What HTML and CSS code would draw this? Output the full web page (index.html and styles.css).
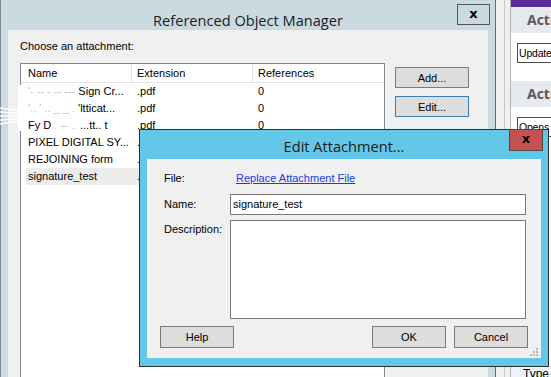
FILE: index.html
```html
<!DOCTYPE html>
<html lang="en">
<head>
    <meta charset="UTF-8">
    <title>Referenced Object Manager</title>
    <link rel="stylesheet" href="styles.css">
</head>
<body>
    <div class="desktop">
        <!-- finestra principale -->
        <div class="manager">
            <div class="win-title">
                <span class="title-text">Referenced Object Manager</span>
                <span class="close-btn">x</span>
            </div>
            <div class="manager-body">
                <div class="prompt">Choose an attachment:</div>
                <div class="manager-row">
                    <div class="listview">
                        <div class="lv-header">
                            <span class="col-name">Name</span>
                            <span class="col-ext">Extension</span>
                            <span class="col-ref">References</span>
                        </div>
                        <div class="lv-row over-patch">
                            <span class="col-name"><span class="smudge">'- -- - -- ---  </span>Sign Cr...</span>
                            <span class="col-ext">.pdf</span>
                            <span class="col-ref">0</span>
                        </div>
                        <div class="lv-row over-patch">
                            <span class="col-name"><span class="smudge">'.. ' .. _ _ . </span>'ltticat...</span>
                            <span class="col-ext">.pdf</span>
                            <span class="col-ref">0</span>
                        </div>
                        <div class="lv-row over-patch">
                            <span class="col-name">Fy D<span class="smudge">.. -- ..</span> ...tt.. t</span>
                            <span class="col-ext">.pdf</span>
                            <span class="col-ref">0</span>
                        </div>
                        <div class="lv-row">
                            <span class="col-name">PIXEL DIGITAL SY...</span>
                            <span class="col-ext">.pdf</span>
                            <span class="col-ref">0</span>
                        </div>
                        <div class="lv-row">
                            <span class="col-name">REJOINING form</span>
                            <span class="col-ext">.pdf</span>
                            <span class="col-ref">0</span>
                        </div>
                        <div class="lv-row selected">
                            <span class="col-name">signature_test</span>
                            <span class="col-ext">.pdf</span>
                            <span class="col-ref">0</span>
                        </div>
                    </div>
                    <div class="side-buttons">
                        <button class="btn">Add...</button>
                        <button class="btn btn-focus">Edit...</button>
                    </div>
                </div>
            </div>
        </div>

        <div class="gutter"><div class="gutter-line"></div></div>

        <!-- pannello a destra -->
        <div class="side-panel">
            <div class="panel-top"></div>
            <div class="panel-band">Acti</div>
            <div class="panel-section"><div class="panel-input">Update</div></div>
            <div class="panel-band">Acti</div>
            <div class="panel-section tall"><div class="panel-input">Opens</div></div>
            <div class="panel-foot">Type</div>
        </div>

        <!-- ritaglio bianco sopra la lista -->
        <div class="patch"></div>
        <svg class="streaks" width="30" height="22" viewBox="0 0 30 22">
            <path d="M0 2 L24 5 M0 6 L26 8 M0 10 L28 10 M0 14 L26 12 M0 18 L22 15" stroke="#fff" stroke-width="1.6" fill="none"/>
        </svg>

        <!-- finestra di dialogo -->
        <div class="dialog">
            <div class="win-title dialog-title">
                <span class="title-text">Edit Attachment...</span>
                <span class="close-btn close-red">x</span>
            </div>
            <div class="dialog-body">
                <div class="field-row file-row">
                    <span class="field-label">File:</span>
                    <a class="link" href="#">Replace Attachment File</a>
                </div>
                <div class="field-row name-row">
                    <span class="field-label">Name:</span>
                    <div class="textbox">signature_test</div>
                </div>
                <div class="field-row desc-row">
                    <span class="field-label">Description:</span>
                    <div class="textarea"></div>
                </div>
                <div class="dialog-buttons">
                    <button class="btn">Help</button>
                    <span class="spacer"></span>
                    <button class="btn">OK</button>
                    <button class="btn">Cancel</button>
                </div>
                <svg class="grip" width="10" height="10" viewBox="0 0 10 10">
                    <rect x="8" y="2" width="2" height="2" fill="#b8b8b8"/>
                    <rect x="5" y="5" width="2" height="2" fill="#b8b8b8"/>
                    <rect x="8" y="5" width="2" height="2" fill="#b8b8b8"/>
                    <rect x="2" y="8" width="2" height="2" fill="#b8b8b8"/>
                    <rect x="5" y="8" width="2" height="2" fill="#b8b8b8"/>
                    <rect x="8" y="8" width="2" height="2" fill="#b8b8b8"/>
                </svg>
            </div>
        </div>
    </div>
</body>
</html>
```

FILE: styles.css
```css
* {
    box-sizing: border-box;
}
body {
    margin: 0;
    font-family: "Liberation Sans", Arial, sans-serif;
    font-size: 11px;
    color: #000;
    background-color: #f0f0f0;
}
.desktop {
    position: relative;
    width: 551px;
    height: 377px;
    overflow: hidden;
    display: flex;
}

/* finestra principale */
.manager {
    flex: none;
    width: 496px;
    height: 377px;
    background-color: #c9dbe1;
    border-left: 1px solid #7f8b90;
    border-right: 1px solid #6b6b6b;
    padding: 0 7px;
    display: flex;
    flex-direction: column;
}
.win-title {
    height: 33px;
    display: grid;
    grid-template-columns: 1fr auto 1fr;
    align-items: start;
}
.title-text {
    grid-column: 2;
    font-family: "Open Sans", sans-serif;
    font-size: 14.6px;
    line-height: 20px;
    padding-top: 10px;
    color: #1b1b1b;
    white-space: nowrap;
}
.close-btn {
    grid-column: 3;
    justify-self: end;
    width: 33px;
    height: 21px;
    margin-top: 4px;
    margin-right: -2px;
    border: 1px solid #555;
    text-align: center;
    font-family: "DejaVu Sans", sans-serif;
    font-weight: bold;
    font-size: 13px;
    line-height: 17px;
}
.manager-body {
    flex: 1;
    background-color: #f0f0f0;
    padding: 10px 0 0 12px;
}
.prompt {
    line-height: 13px;
}
.manager-row {
    display: flex;
    gap: 10px;
    margin-top: 10px;
}
.listview {
    width: 365px;
    height: 400px;
    background-color: #fff;
    border: 1px solid #828790;
}
.lv-header {
    display: grid;
    grid-template-columns: 111px 121px 1fr;
    height: 19px;
    border-bottom: 1px solid #e5e5e5;
}
.lv-header span {
    padding-top: 1px;
    line-height: 17px;
    border-right: 1px solid #e5e5e5;
}
.lv-header .col-ref {
    border-right: none;
}
.col-name {
    padding-left: 7px;
    white-space: nowrap;
    overflow: hidden;
}
.col-ext,
.col-ref {
    padding-left: 5px;
}
.lv-row {
    display: grid;
    grid-template-columns: 106px 121px 1fr;
    margin-left: 5px;
    height: 17px;
    line-height: 17px;
}
.lv-row .col-name {
    padding-left: 2px;
}
.lv-row.selected {
    background-color: #ececec;
}
.over-patch {
    position: relative;
    z-index: 1;
}
.smudge {
    color: #c4c4c4;
}
.side-buttons {
    width: 74px;
    margin-top: 4px;
    display: flex;
    flex-direction: column;
    gap: 8px;
}
.btn {
    height: 21px;
    padding: 0;
    font-family: "Liberation Sans", Arial, sans-serif;
    font-size: 11px;
    color: #000;
    background-color: #dddddd;
    border: 1px solid #7c7c7c;
}
.btn-focus {
    border-color: #3c7fb1;
}

/* spazio tra le finestre */
.gutter {
    flex: none;
    width: 14px;
    background-color: #f0f0f0;
    padding-left: 8px;
}
.gutter-line {
    width: 1px;
    height: 100%;
    background-color: #c7c7c7;
}

/* pannello a destra */
.side-panel {
    flex: none;
    width: 41px;
    background-color: #fff;
    border-left: 1px solid #b5b5b5;
    overflow: hidden;
}
.panel-top {
    height: 7px;
    background-color: #5a2b97;
}
.panel-band {
    height: 26px;
    padding-left: 16px;
    background-color: #e6e9ee;
    font-family: "Open Sans", sans-serif;
    font-weight: bold;
    font-size: 14px;
    line-height: 26px;
    color: #5a5a5a;
    white-space: nowrap;
}
.panel-section {
    height: 48px;
    padding: 10px 0 0 6px;
}
.panel-section.tall {
    height: 259px;
}
.panel-input {
    width: 60px;
    height: 20px;
    border: 1px solid #4e4e4e;
    padding-left: 1px;
    font-size: 10.5px;
    letter-spacing: -0.2px;
    line-height: 18px;
}
.panel-foot {
    padding-left: 12px;
    font-size: 12px;
    line-height: 16px;
    background-color: #eef4fa;
}

/* ritaglio bianco */
.patch {
    position: absolute;
    left: 18px;
    top: 85px;
    width: 117px;
    height: 46px;
    background-color: #fff;
}
.streaks {
    position: absolute;
    left: 0;
    top: 106px;
}

/* finestra di dialogo */
.dialog {
    position: absolute;
    z-index: 2;
    left: 139px;
    top: 129px;
    width: 410px;
    height: 238px;
    background-color: #63c7e8;
    border: 1px solid #2f2f2f;
    padding: 0 7px 8px 7px;
    display: flex;
    flex-direction: column;
}
.dialog-title {
    height: 29px;
}
.dialog-title .title-text {
    padding-top: 6px;
}
.close-red {
    width: 34px;
    height: 22px;
    margin-top: -1px;
    margin-right: -2px;
    background-color: #c75050;
    border-color: #4a4a4a;
}
.dialog-body {
    position: relative;
    flex: 1;
    background-color: #f0f0f0;
    padding: 13px 15px 10px 17px;
    display: flex;
    flex-direction: column;
}
.field-row {
    display: flex;
    align-items: center;
}
.field-label {
    width: 66px;
    flex: none;
    line-height: 13px;
}
.file-row {
    height: 13px;
}
.file-row .field-label {
    width: 72px;
}
.link {
    color: #1a3be0;
    text-decoration: underline;
    line-height: 13px;
}
.name-row {
    margin-top: 9px;
}
.textbox {
    flex: 1;
    height: 21px;
    background-color: #fff;
    border: 1px solid #7a7a7a;
    padding-left: 2px;
    line-height: 19px;
}
.desc-row {
    margin-top: 5px;
    align-items: flex-start;
}
.desc-row .field-label {
    padding-top: 3px;
}
.textarea {
    flex: 1;
    height: 99px;
    background-color: #fff;
    border: 1px solid #7a7a7a;
}
.dialog-buttons {
    display: flex;
    gap: 8px;
    margin-top: 7px;
    margin-left: -4px;
    margin-right: -2px;
}
.dialog-buttons .btn {
    width: 74px;
    height: 22px;
}
.spacer {
    flex: 1;
}
.grip {
    position: absolute;
    right: 3px;
    bottom: 2px;
}
```
